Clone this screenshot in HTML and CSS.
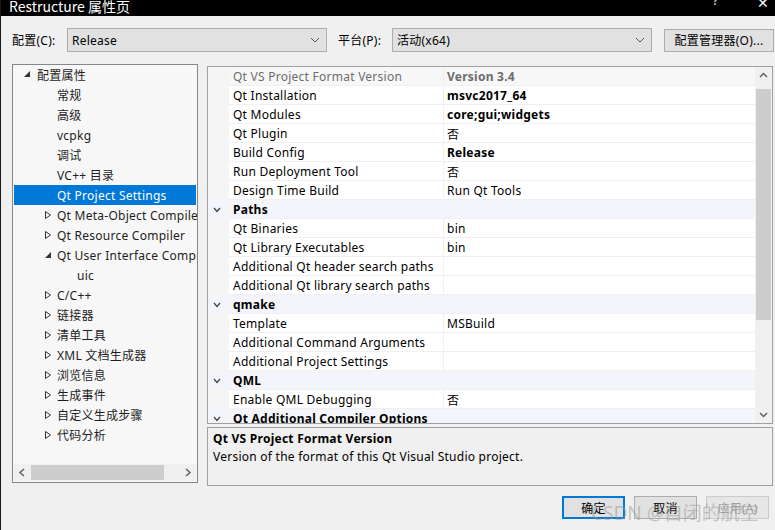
FILE: index.html
```html
<!DOCTYPE html>
<html lang="zh">
<head>
<meta charset="utf-8">
<title>Restructure 属性页</title>
<link rel="stylesheet" href="styles.css">
</head>
<body>
<div class="window">
  <div class="titlebar">
    <span class="title">Restructure 属性页</span>
    <span class="tb-help">?</span>
    <span class="tb-close">✕</span>
  </div>

  <div class="toolbar">
    <span class="lbl">配置(C):</span>
    <div class="select sel-config"><span>Release</span>
      <svg class="chev" width="10" height="6" viewBox="0 0 10 6"><polyline points="1,1 5,5 9,1" fill="none" stroke="#555" stroke-width="1"/></svg>
    </div>
    <span class="lbl lbl-plat">平台(P):</span>
    <div class="select sel-plat"><span>活动(x64)</span>
      <svg class="chev" width="10" height="6" viewBox="0 0 10 6"><polyline points="1,1 5,5 9,1" fill="none" stroke="#555" stroke-width="1"/></svg>
    </div>
    <div class="btn btn-mgr">配置管理器(O)...</div>
  </div>

  <div class="main">
    <div class="tree">
      <div class="tree-items">
        <div class="ti lvl0"><svg class="tri" width="8" height="8" viewBox="0 0 8 8"><polygon points="7,1 7,7 1,7" fill="#333"/></svg><span>配置属性</span></div>
        <div class="ti lvl1"><span>常规</span></div>
        <div class="ti lvl1"><span>高级</span></div>
        <div class="ti lvl1"><span>vcpkg</span></div>
        <div class="ti lvl1"><span>调试</span></div>
        <div class="ti lvl1"><span>VC++ 目录</span></div>
        <div class="ti lvl1 selected"><span>Qt Project Settings</span></div>
        <div class="ti lvl1"><svg class="tri" width="8" height="10" viewBox="0 0 8 10"><polygon points="1.5,1.5 6.5,5 1.5,8.5" fill="none" stroke="#333" stroke-width="1"/></svg><span>Qt Meta-Object Compiler</span></div>
        <div class="ti lvl1"><svg class="tri" width="8" height="10" viewBox="0 0 8 10"><polygon points="1.5,1.5 6.5,5 1.5,8.5" fill="none" stroke="#333" stroke-width="1"/></svg><span>Qt Resource Compiler</span></div>
        <div class="ti lvl1"><svg class="tri" width="8" height="10" viewBox="0 0 8 10"><polygon points="7,2 7,8 1,8" fill="#333"/></svg><span>Qt User Interface Compiler</span></div>
        <div class="ti lvl2"><span>uic</span></div>
        <div class="ti lvl1"><svg class="tri" width="8" height="10" viewBox="0 0 8 10"><polygon points="1.5,1.5 6.5,5 1.5,8.5" fill="none" stroke="#333" stroke-width="1"/></svg><span>C/C++</span></div>
        <div class="ti lvl1"><svg class="tri" width="8" height="10" viewBox="0 0 8 10"><polygon points="1.5,1.5 6.5,5 1.5,8.5" fill="none" stroke="#333" stroke-width="1"/></svg><span>链接器</span></div>
        <div class="ti lvl1"><svg class="tri" width="8" height="10" viewBox="0 0 8 10"><polygon points="1.5,1.5 6.5,5 1.5,8.5" fill="none" stroke="#333" stroke-width="1"/></svg><span>清单工具</span></div>
        <div class="ti lvl1"><svg class="tri" width="8" height="10" viewBox="0 0 8 10"><polygon points="1.5,1.5 6.5,5 1.5,8.5" fill="none" stroke="#333" stroke-width="1"/></svg><span>XML 文档生成器</span></div>
        <div class="ti lvl1"><svg class="tri" width="8" height="10" viewBox="0 0 8 10"><polygon points="1.5,1.5 6.5,5 1.5,8.5" fill="none" stroke="#333" stroke-width="1"/></svg><span>浏览信息</span></div>
        <div class="ti lvl1"><svg class="tri" width="8" height="10" viewBox="0 0 8 10"><polygon points="1.5,1.5 6.5,5 1.5,8.5" fill="none" stroke="#333" stroke-width="1"/></svg><span>生成事件</span></div>
        <div class="ti lvl1"><svg class="tri" width="8" height="10" viewBox="0 0 8 10"><polygon points="1.5,1.5 6.5,5 1.5,8.5" fill="none" stroke="#333" stroke-width="1"/></svg><span>自定义生成步骤</span></div>
        <div class="ti lvl1"><svg class="tri" width="8" height="10" viewBox="0 0 8 10"><polygon points="1.5,1.5 6.5,5 1.5,8.5" fill="none" stroke="#333" stroke-width="1"/></svg><span>代码分析</span></div>
      </div>
      <div class="hscroll">
        <svg class="sarrow" width="17" height="17" viewBox="0 0 17 17"><polyline points="10,5 6,8.5 10,12" fill="none" stroke="#606060" stroke-width="1.5"/></svg>
        <div class="htrack"><div class="hthumb"></div></div>
        <svg class="sarrow" width="17" height="17" viewBox="0 0 17 17"><polyline points="7,5 11,8.5 7,12" fill="none" stroke="#606060" stroke-width="1.5"/></svg>
      </div>
    </div>

    <div class="rightcol">
      <div class="grid">
        <div class="rows">
          <div class="row disabled"><div class="gut"></div><div class="name">Qt VS Project Format Version</div><div class="val b">Version 3.4</div></div>
          <div class="row"><div class="gut"></div><div class="name">Qt Installation</div><div class="val b">msvc2017_64</div></div>
          <div class="row"><div class="gut"></div><div class="name">Qt Modules</div><div class="val b">core;gui;widgets</div></div>
          <div class="row"><div class="gut"></div><div class="name">Qt Plugin</div><div class="val">否</div></div>
          <div class="row"><div class="gut"></div><div class="name">Build Config</div><div class="val b">Release</div></div>
          <div class="row"><div class="gut"></div><div class="name">Run Deployment Tool</div><div class="val">否</div></div>
          <div class="row"><div class="gut"></div><div class="name">Design Time Build</div><div class="val">Run Qt Tools</div></div>
          <div class="row cat"><div class="gut"><svg width="8" height="6" viewBox="0 0 8 6"><polyline points="1,1 4,4.5 7,1" fill="none" stroke="#444" stroke-width="1.3"/></svg></div><div class="catname">Paths</div></div>
          <div class="row"><div class="gut"></div><div class="name">Qt Binaries</div><div class="val">bin</div></div>
          <div class="row"><div class="gut"></div><div class="name">Qt Library Executables</div><div class="val">bin</div></div>
          <div class="row"><div class="gut"></div><div class="name">Additional Qt header search paths</div><div class="val"></div></div>
          <div class="row"><div class="gut"></div><div class="name">Additional Qt library search paths</div><div class="val"></div></div>
          <div class="row cat"><div class="gut"><svg width="8" height="6" viewBox="0 0 8 6"><polyline points="1,1 4,4.5 7,1" fill="none" stroke="#444" stroke-width="1.3"/></svg></div><div class="catname">qmake</div></div>
          <div class="row"><div class="gut"></div><div class="name">Template</div><div class="val">MSBuild</div></div>
          <div class="row"><div class="gut"></div><div class="name">Additional Command Arguments</div><div class="val"></div></div>
          <div class="row"><div class="gut"></div><div class="name">Additional Project Settings</div><div class="val"></div></div>
          <div class="row cat"><div class="gut"><svg width="8" height="6" viewBox="0 0 8 6"><polyline points="1,1 4,4.5 7,1" fill="none" stroke="#444" stroke-width="1.3"/></svg></div><div class="catname">QML</div></div>
          <div class="row"><div class="gut"></div><div class="name">Enable QML Debugging</div><div class="val">否</div></div>
          <div class="row cat"><div class="gut"><svg width="8" height="6" viewBox="0 0 8 6"><polyline points="1,1 4,4.5 7,1" fill="none" stroke="#444" stroke-width="1.3"/></svg></div><div class="catname">Qt Additional Compiler Options</div></div>
        </div>
        <div class="vscroll">
          <svg class="sarrow" width="17" height="17" viewBox="0 0 17 17"><polyline points="5,10 8.5,6.5 12,10" fill="none" stroke="#606060" stroke-width="1.5"/></svg>
          <div class="vtrack"><div class="vthumb"></div></div>
          <svg class="sarrow" width="17" height="17" viewBox="0 0 17 17"><polyline points="5,7 8.5,10.5 12,7" fill="none" stroke="#606060" stroke-width="1.5"/></svg>
        </div>
      </div>
      <div class="desc">
        <div class="desc-title">Qt VS Project Format Version</div>
        <div class="desc-text">Version of the format of this Qt Visual Studio project.</div>
      </div>
    </div>
  </div>

  <div class="footer">
    <div class="btn fbtn default">确定</div>
    <div class="btn fbtn">取消</div>
    <div class="btn fbtn disabled-btn">应用(A)</div>
  </div>
  <div class="watermark">CSDN @自闭的航空</div>
</div>
</body>
</html>
```

FILE: styles.css
```css
* { box-sizing: border-box; }
html, body {
  margin: 0;
  padding: 0;
}
body {
  width: 775px;
  height: 530px;
  overflow: hidden;
  background: #f0f0f0;
  font-family: "Noto Sans", "Noto Sans CJK SC", sans-serif;
  font-size: 12px;
  letter-spacing: 0.25px;
  color: #000;
}
.window {
  position: relative;
  width: 775px;
  height: 530px;
  border-left: 1px solid #1a1a1a;
  display: flex;
  flex-direction: column;
  overflow: hidden;
}
.titlebar {
  height: 16px;
  background: #000;
  color: #fff;
  display: flex;
  align-items: flex-end;
  overflow: hidden;
  flex: none;
}
.title {
  font-family: "Noto Sans CJK SC", "Noto Sans", sans-serif;
  font-size: 14px;
  line-height: 14px;
  margin-left: 8px;
  margin-bottom: 3px;
  letter-spacing: 0;
}
.tb-help {
  margin-left: auto;
  font-size: 12px;
  line-height: 12px;
  margin-bottom: 9px;
  width: 10px;
}
.tb-close {
  font-size: 14px;
  line-height: 14px;
  margin-left: 34px;
  margin-right: 6px;
  margin-bottom: 6px;
}
.toolbar {
  flex: none;
  display: flex;
  align-items: center;
  height: 24px;
  margin-top: 12px;
  padding-left: 11px;
}
.lbl {
  width: 55px;
  white-space: nowrap;
}
.lbl-plat {
  width: 54px;
  margin-left: 11px;
}
.select {
  height: 24px;
  background: #e1e1e1;
  border: 1px solid #adadad;
  display: flex;
  align-items: center;
  padding-left: 4px;
  padding-right: 6px;
  justify-content: space-between;
}
.sel-config { width: 260px; }
.sel-plat { width: 260px; }
.btn {
  background: #e1e1e1;
  border: 1px solid #adadad;
  display: flex;
  align-items: center;
  justify-content: center;
  white-space: nowrap;
}
.btn-mgr {
  width: 110px;
  height: 23px;
  margin-left: 12px;
}
.main {
  flex: none;
  display: flex;
  margin-top: 12px;
  height: 422px;
}
.tree {
  margin-left: 11px;
  width: 186px;
  height: 419px;
  border: 1px solid #828790;
  background: #f7f7f7;
  display: flex;
  flex-direction: column;
}
.tree-items {
  flex: 1;
  overflow: hidden;
}
.ti {
  height: 20px;
  display: flex;
  align-items: center;
  white-space: nowrap;
  position: relative;
  color: #1e1e1e;
  margin: 0 1px;
}
.ti .tri {
  flex: none;
}
.lvl0 { padding-left: 9px; }
.lvl0 .tri { margin-right: 6px; margin-top: -2px; }
.lvl1 { padding-left: 43px; }
.lvl1 .tri { position: absolute; left: 30px; top: 5px; }
.lvl2 { padding-left: 63px; }
.ti.selected {
  background: #0078d7;
  color: #fff;
}
.hscroll {
  height: 17px;
  display: flex;
  align-items: center;
  background: #f0f0f0;
  margin: 0 1px 1px 1px;
}
.sarrow { flex: none; display: block; }
.htrack {
  flex: 1;
  height: 17px;
  display: flex;
  align-items: center;
}
.hthumb {
  width: 133px;
  height: 15px;
  background: #cdcdcd;
}
.rightcol {
  margin-left: 9px;
  width: 566px;
  display: flex;
  flex-direction: column;
}
.grid {
  margin-top: 2px;
  height: 358px;
  border: 1px solid #a0a0a0;
  background: #fff;
  display: flex;
  overflow: hidden;
}
.rows {
  flex: 1;
  overflow: hidden;
}
.row {
  height: 19px;
  display: flex;
  align-items: stretch;
  white-space: nowrap;
}
.gut {
  width: 21px;
  flex: none;
  background: #f5f5f5;
  display: flex;
  align-items: center;
  padding-left: 5px;
}
.name {
  width: 215px;
  flex: none;
  padding-left: 4px;
  padding-top: 1px;
  border-bottom: 1px solid #f0f0f0;
  border-right: 1px solid #f0f0f0;
  display: flex;
  align-items: center;
  overflow: hidden;
}
.val {
  flex: 1;
  padding-left: 3px;
  padding-top: 1px;
  border-bottom: 1px solid #f0f0f0;
  display: flex;
  align-items: center;
}
.val.b { font-weight: 700; }
.row.disabled .name,
.row.disabled .val {
  color: #6d6d6d;
  background: #f7f7f7;
}
.row.cat {
  background: #f3f5fa;
}
.row.cat .gut { background: #f3f5fa; }
.catname {
  flex: 1;
  padding-left: 4px;
  padding-top: 1px;
  font-weight: 700;
  display: flex;
  align-items: center;
  border-bottom: 1px solid #eceff5;
}
.vscroll {
  width: 17px;
  flex: none;
  background: #f0f0f0;
  display: flex;
  flex-direction: column;
}
.vtrack {
  flex: 1;
  display: flex;
  justify-content: center;
}
.vthumb {
  width: 15px;
  height: 231px;
  margin-top: 5px;
  background: #cdcdcd;
}
.desc {
  margin-top: 3px;
  height: 59px;
  border: 1px solid #a0a0a0;
  background: #f0f0f0;
  padding: 2px 5px;
}
.desc-title {
  font-weight: 700;
  line-height: 17px;
}
.desc-text {
  line-height: 17px;
  margin-top: 1px;
}
.footer {
  flex: none;
  display: flex;
  justify-content: flex-end;
  gap: 9px;
  margin-top: 10px;
  padding-right: 6px;
}
.fbtn {
  width: 63px;
  height: 23px;
}
.fbtn.default {
  border: 2px solid #0078d7;
}
.disabled-btn {
  color: #a0a0a0;
  border-color: #cccccc;
  background: #e6e6e6;
}
.watermark {
  position: absolute;
  left: 590px;
  top: 498px;
  font-size: 19px;
  letter-spacing: 0;
  color: rgba(150, 150, 150, 0.5);
  white-space: nowrap;
  pointer-events: none;
}
```
